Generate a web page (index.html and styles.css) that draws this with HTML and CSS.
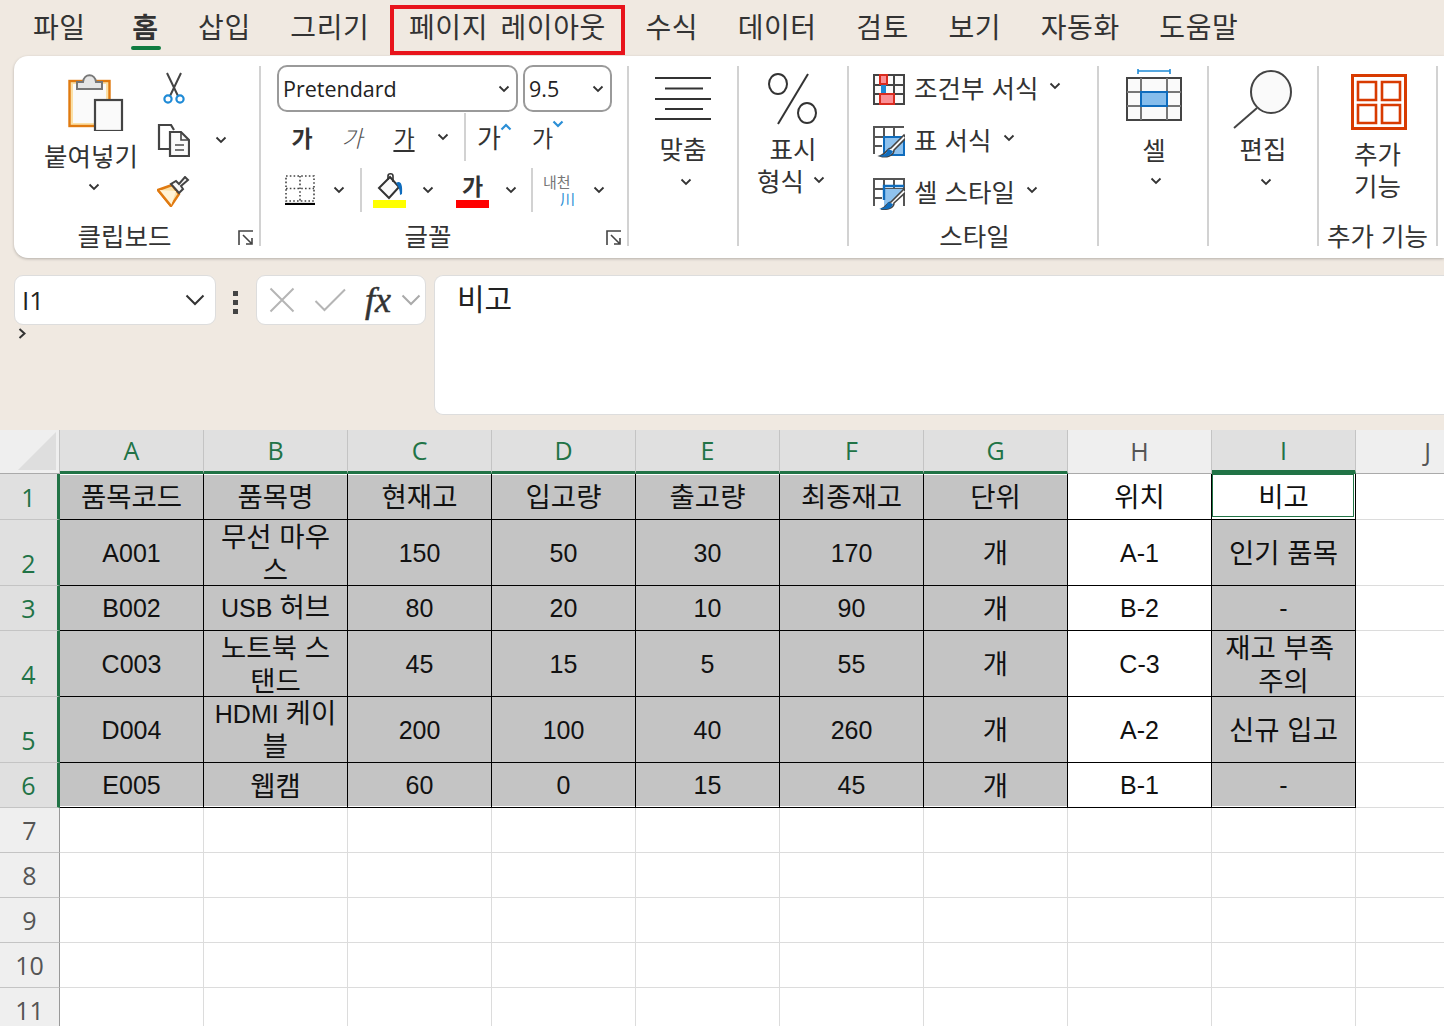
FILE: index.html
```html
<!DOCTYPE html>
<html lang="ko">
<head>
    <meta charset="utf-8" />
    <title>Excel</title>
    <link rel="stylesheet" href="styles.css">
</head>
<body>
    <svg class="defs" width="0" height="0">
        <symbol id="chev" viewBox="0 0 12 8"><path d="M1.5 1.5 6 6l4.5-4.5" fill="none" stroke="#333" stroke-width="1.8"/></symbol>
        <symbol id="launch" viewBox="0 0 16 16"><path d="M1 15V1h14M5 5l9 9M14 8v6H8" fill="none" stroke="#444" stroke-width="1.6"/></symbol>
    </svg>

    <nav class="tabs">
        <span class="tab">파일</span>
        <span class="tab tab-home">홈</span>
        <span class="tab">삽입</span>
        <span class="tab">그리기</span>
        <span class="tab tab-marked">페이지 레이아웃</span>
        <span class="tab">수식</span>
        <span class="tab">데이터</span>
        <span class="tab">검토</span>
        <span class="tab">보기</span>
        <span class="tab">자동화</span>
        <span class="tab">도움말</span>
    </nav>

    <section class="ribbon">
        <div class="group group-clip">
            <div class="clip-body">
                <div class="paste">
                    <svg class="paste-icon" width="56" height="60" viewBox="0 0 56 60">
                        <rect x="1.5" y="10" width="40" height="45" fill="#fbe0a6" stroke="#e07a10" stroke-width="2.4"/>
                        <rect x="5" y="13" width="33" height="39" fill="#fafafa"/>
                        <path d="M9 18v-7h6c1-9 12-9 13 0h6v7z" fill="#e6e6e6" stroke="#777" stroke-width="2"/>
                        <rect x="27" y="29" width="27" height="31" fill="#fafafa" stroke="#444" stroke-width="2.2"/>
                    </svg>
                    <span class="big-label">붙여넣기</span>
                    <svg class="chev chev-paste"><use href="#chev"/></svg>
                </div>
                <div class="clip-tools">
                    <svg width="22" height="33" viewBox="0 0 22 33">
                        <path d="M4 1 15 24M18 1 7 24" fill="none" stroke="#444" stroke-width="2"/>
                        <circle cx="5" cy="27" r="3.6" fill="none" stroke="#1e8ad6" stroke-width="2.2"/>
                        <circle cx="17" cy="27" r="3.6" fill="none" stroke="#1e8ad6" stroke-width="2.2"/>
                    </svg>
                    <svg width="33" height="33" viewBox="0 0 33 33">
                        <path d="M12 25H2V1h12l3 5" fill="none" stroke="#444" stroke-width="2.2"/>
                        <path d="M13 32V8h11l8 8v16z" fill="#fafafa" stroke="#444" stroke-width="2.2"/>
                        <path d="M24 8v8h8" fill="none" stroke="#444" stroke-width="1.6"/>
                        <path d="M18 21h9M18 26h9" stroke="#777" stroke-width="2"/>
                    </svg>
                    <svg width="33" height="31" viewBox="0 0 33 31">
                        <path d="M1 14 15 9l7 9-8 12z" fill="#fbe0a6" stroke="#e07a10" stroke-width="2.4"/>
                        <path d="M1 14 19 15 14 30z" fill="#fff3d6" stroke="none"/>
                        <path d="M1 14 14 30" stroke="#e07a10" stroke-width="2.4"/>
                        <path d="M14 8l8 9 4-4-2-3 7-6-3-3-6 7-3-3z" fill="#fafafa" stroke="#444" stroke-width="2"/>
                    </svg>
                </div>
                <svg class="chev chev-copy"><use href="#chev"/></svg>
            </div>
            <div class="group-label">클립보드</div>
            <svg class="launcher"><use href="#launch"/></svg>
        </div>

        <div class="group group-font">
            <div class="font-combos">
                <div class="combo combo-font">Pretendard<svg class="chev"><use href="#chev"/></svg></div>
                <div class="combo combo-size">9.5<svg class="chev"><use href="#chev"/></svg></div>
            </div>
            <div class="font-row font-row-a">
                <span class="glyph glyph-b">가</span>
                <span class="glyph glyph-i">가</span>
                <span class="glyph glyph-u">가</span>
                <svg class="chev"><use href="#chev"/></svg>
                <i class="vline vline-a"></i>
                <span class="glyph glyph-grow">가<svg width="12" height="8" viewBox="0 0 12 8"><path d="M1.5 6.5 6 2l4.5 4.5" fill="none" stroke="#2b8fd6" stroke-width="2.2"/></svg></span>
                <span class="glyph glyph-shrink">가<svg width="12" height="8" viewBox="0 0 12 8"><path d="M1.5 1.5 6 6l4.5-4.5" fill="none" stroke="#2b8fd6" stroke-width="2.2"/></svg></span>
            </div>
            <div class="font-row font-row-b">
                <svg class="border-icon" width="30" height="30" viewBox="0 0 30 30">
                    <path d="M1 1h28v25H1zM1 13.5h28M15 1v25" fill="none" stroke="#444" stroke-width="1.6" stroke-dasharray="1.6 2.2"/>
                    <path d="M0 29h30" stroke="#000" stroke-width="2.2"/>
                </svg>
                <svg class="chev"><use href="#chev"/></svg>
                <i class="vline vline-b"></i>
                <div class="swatch swatch-fill">
                    <svg width="32" height="28" viewBox="0 0 32 28">
                        <path d="M5 16 16 5l9 10-10 11z" fill="#fafafa" stroke="#333" stroke-width="2"/>
                        <path d="M14 8V4c0-3 5-3 5 0v6" fill="none" stroke="#333" stroke-width="1.6"/>
                        <path d="M22 11c4-3 7 0 6 11l-2 1c0-4-1-8-4-12z" fill="#0f6cbd"/>
                    </svg>
                </div>
                <svg class="chev"><use href="#chev"/></svg>
                <div class="swatch swatch-color"><span>가</span></div>
                <svg class="chev"><use href="#chev"/></svg>
                <i class="vline vline-c"></i>
                <div class="phonetic"><span>내천</span><b>川</b></div>
                <svg class="chev"><use href="#chev"/></svg>
            </div>
            <div class="group-label">글꼴</div>
            <svg class="launcher"><use href="#launch"/></svg>
        </div>

        <div class="group group-big group-align">
            <svg class="big-icon" width="56" height="44" viewBox="0 0 56 44">
                <path d="M0 2h56M10 12.500h38M0 23h56M10 33h38M0 43h56" stroke="#333" stroke-width="1.8"/>
            </svg>
            <span class="big-label">맞춤</span>
            <svg class="chev"><use href="#chev"/></svg>
        </div>

        <div class="group group-big group-number">
            <svg class="big-icon" width="50" height="52" viewBox="0 0 50 52">
                <ellipse cx="10" cy="11" rx="9" ry="10" fill="none" stroke="#333" stroke-width="2"/>
                <ellipse cx="39" cy="40" rx="9" ry="10" fill="none" stroke="#333" stroke-width="2"/>
                <path d="M40 1 10 51" stroke="#333" stroke-width="2"/>
            </svg>
            <span class="big-label">표시</span>
            <span class="big-label big-label-row">형식<svg class="chev"><use href="#chev"/></svg></span>
        </div>

        <div class="group group-styles">
            <div class="style-list">
                <div class="style-item">
                    <svg width="32" height="32" viewBox="0 0 32 32">
                        <path d="M1 1h30v29H1zM11 1v29M21 1v29M1 11h30M1 20h30" fill="#fafafa" stroke="#444" stroke-width="2"/>
                        <rect x="8" y="11" width="5" height="10" fill="#1e8ad6"/>
                        <path d="M7 1h7v9H7zM7 20h14v10H7z" fill="#fb8f95" stroke="#d92b1f" stroke-width="2"/>
                    </svg>
                    조건부 서식<svg class="chev"><use href="#chev"/></svg>
                </div>
                <div class="style-item">
                    <svg width="32" height="32" viewBox="0 0 32 32">
                        <path d="M1 28V1h30M11 1v12M21 1v10M1 11h20M1 20h8" fill="none" stroke="#555" stroke-width="2"/>
                        <path d="M11 11h20v18H11z" fill="#8fc2ee" stroke="#0f6cbd" stroke-width="2"/>
                        <path d="M31 9 18 22c-4 0-4 6-11 8 6 2 14 0 14-6L33 12z" fill="#fafafa" stroke="#444" stroke-width="1.6"/>
                        <path d="M6 30c5-1 8-3 9-7l5 2c-1 5-8 7-14 5z" fill="#0f6cbd"/>
                    </svg>
                    표 서식<svg class="chev"><use href="#chev"/></svg>
                </div>
                <div class="style-item">
                    <svg width="32" height="32" viewBox="0 0 32 32">
                        <path d="M1 28V1h30v27M11 22V1M21 1v10M1 11h30M1 20h8" fill="none" stroke="#555" stroke-width="2"/>
                        <path d="M11 11h20v1L15 28h-4z" fill="#8fc2ee"/>
                        <path d="M11 22V8h20" fill="none" stroke="#0f6cbd" stroke-width="2.4"/>
                        <path d="M31 11 18 24c-4 0-4 5-10 7 6 1 13-1 13-6L33 14z" fill="#fafafa" stroke="#444" stroke-width="1.6"/>
                        <path d="M6 31c5-1 8-3 9-7l5 2c-1 5-8 6-14 5z" fill="#0f6cbd"/>
                    </svg>
                    셀 스타일<svg class="chev"><use href="#chev"/></svg>
                </div>
            </div>
            <div class="group-label">스타일</div>
        </div>

        <div class="group group-big group-cells">
            <svg class="big-icon" width="56" height="52" viewBox="0 0 56 52">
                <path d="M16 2h32M16 0v5M48 0v5" transform="translate(-4 0)" fill="none" stroke="#1e8ad6" stroke-width="1.6"/>
                <rect x="1" y="9" width="54" height="42" fill="#fafafa" stroke="#444" stroke-width="2"/>
                <path d="M15 9v42M41 9v42M1 23h54M1 37h54" stroke="#777" stroke-width="2"/>
                <rect x="15" y="23" width="26" height="14" fill="#86bdec" stroke="#0f6cbd" stroke-width="2"/>
            </svg>
            <span class="big-label">셀</span>
            <svg class="chev"><use href="#chev"/></svg>
        </div>

        <div class="group group-big group-edit">
            <svg class="big-icon" width="60" height="60" viewBox="0 0 60 60">
                <ellipse cx="38" cy="22" rx="20" ry="21" fill="#fafafa" stroke="#444" stroke-width="2"/>
                <path d="M24 38 1 58" stroke="#444" stroke-width="2"/>
            </svg>
            <span class="big-label">편집</span>
            <svg class="chev"><use href="#chev"/></svg>
        </div>

        <div class="group group-big group-addin">
            <svg class="big-icon" width="56" height="56" viewBox="0 0 56 56">
                <rect x="1.500" y="1.500" width="53" height="53" fill="none" stroke="#d83b01" stroke-width="3"/>
                <path d="M7 8h18v18H7zM31 8h18v18H31zM7 31h18v18H7zM31 31h18v18H31z" fill="none" stroke="#d83b01" stroke-width="2.600"/>
            </svg>
            <span class="big-label">추가</span>
            <span class="big-label">기능</span>
            <div class="group-label">추가 기능</div>
        </div>
    </section>

    <section class="formula-bar">
        <div class="name-col">
            <div class="name-box">I1<svg class="chev-lg" width="20" height="12" viewBox="0 0 20 12"><path d="M1.500 1.500 10 10l8.500-8.500" fill="none" stroke="#333" stroke-width="2"/></svg></div>
            <svg class="expand" width="9" height="11" viewBox="0 0 9 11"><path d="M1.500 1 6.500 5.500 1.500 10" fill="none" stroke="#333" stroke-width="2"/></svg>
        </div>
        <div class="dots"><i></i><i></i><i></i></div>
        <div class="fx-box">
            <svg width="26" height="26" viewBox="0 0 26 26"><path d="M1.500 1.500l23 23M24.500 1.500l-23 23" stroke="#b5b5b5" stroke-width="2"/></svg>
            <svg width="32" height="24" viewBox="0 0 32 24"><path d="M1.500 13l9 9L31 1.500" fill="none" stroke="#b5b5b5" stroke-width="2"/></svg>
            <span class="fx">fx</span>
            <svg width="20" height="12" viewBox="0 0 20 12"><path d="M1.500 1.500 10 10l8.500-8.500" fill="none" stroke="#aaa" stroke-width="2"/></svg>
        </div>
        <div class="formula-input">비고</div>
    </section>

    <table class="sheet">
        <colgroup>
            <col class="col-head"><col><col><col><col><col><col><col><col><col><col>
        </colgroup>
        <tr class="r-head">
            <th class="corner"><svg width="40" height="38" viewBox="0 0 40 38"><path d="M38 0v38H0z" fill="#dedede"/></svg></th>
            <th class="on">A</th><th class="on">B</th><th class="on">C</th><th class="on">D</th><th class="on">E</th><th class="on">F</th><th class="on">G</th><th>H</th><th class="on on-active">I</th><th>J</th>
        </tr>
        <tr class="r46 first">
            <th class="on">1</th>
            <td class="fill ko">품목코드</td><td class="fill ko">품목명</td><td class="fill ko">현재고</td><td class="fill ko">입고량</td><td class="fill ko">출고량</td><td class="fill ko">최종재고</td><td class="fill ko">단위</td>
            <td class="box ko">위치</td><td class="box ko active">비고</td><td></td>
        </tr>
        <tr class="r66">
            <th class="on">2</th>
            <td class="fill">A001</td><td class="fill ko"><div class="two">무선 마우<br>스</div></td><td class="fill">150</td><td class="fill">50</td><td class="fill">30</td><td class="fill">170</td><td class="fill ko">개</td>
            <td class="box">A-1</td><td class="fill ko">인기 품목</td><td></td>
        </tr>
        <tr class="r45">
            <th class="on">3</th>
            <td class="fill">B002</td><td class="fill">USB <span class="ko">허브</span></td><td class="fill">80</td><td class="fill">20</td><td class="fill">10</td><td class="fill">90</td><td class="fill ko">개</td>
            <td class="box">B-2</td><td class="fill">-</td><td></td>
        </tr>
        <tr class="r66">
            <th class="on">4</th>
            <td class="fill">C003</td><td class="fill ko"><div class="two">노트북 스<br>탠드</div></td><td class="fill">45</td><td class="fill">15</td><td class="fill">5</td><td class="fill">55</td><td class="fill ko">개</td>
            <td class="box">C-3</td><td class="fill ko"><div class="two">재고 부족&nbsp;<br>주의</div></td><td></td>
        </tr>
        <tr class="r66">
            <th class="on">5</th>
            <td class="fill">D004</td><td class="fill"><div class="two">HDMI <span class="ko">케이<br>블</span></div></td><td class="fill">200</td><td class="fill">100</td><td class="fill">40</td><td class="fill">260</td><td class="fill ko">개</td>
            <td class="box">A-2</td><td class="fill ko">신규 입고</td><td></td>
        </tr>
        <tr class="r45 last">
            <th class="on">6</th>
            <td class="fill">E005</td><td class="fill ko">웹캠</td><td class="fill">60</td><td class="fill">0</td><td class="fill">15</td><td class="fill">45</td><td class="fill ko">개</td>
            <td class="box">B-1</td><td class="fill">-</td><td></td>
        </tr>
        <tr class="r45"><th>7</th><td></td><td></td><td></td><td></td><td></td><td></td><td></td><td></td><td></td><td></td></tr>
        <tr class="r45"><th>8</th><td></td><td></td><td></td><td></td><td></td><td></td><td></td><td></td><td></td><td></td></tr>
        <tr class="r45"><th>9</th><td></td><td></td><td></td><td></td><td></td><td></td><td></td><td></td><td></td><td></td></tr>
        <tr class="r45"><th>10</th><td></td><td></td><td></td><td></td><td></td><td></td><td></td><td></td><td></td><td></td></tr>
        <tr class="r45"><th>11</th><td></td><td></td><td></td><td></td><td></td><td></td><td></td><td></td><td></td><td></td></tr>
    </table>
</body>
</html>
```

FILE: styles.css
```css
* {
    box-sizing: border-box;
}
html, body {
    margin: 0;
    height: 1026px;
    overflow: hidden;
}
body {
    width: 1444px;
    background: #f0e9e1;
    color: #222;
    font-family: "Noto Sans CJK KR", "Noto Sans", sans-serif;
    font-weight: 400;
}
.defs {
    position: absolute;
}

/* tabs */
.tabs {
    display: flex;
    gap: 39.5px;
    height: 56px;
    padding: 6px 0 0 33px;
    font-size: 28px;
    letter-spacing: 0.6px;
    word-spacing: 4px;
    line-height: 40px;
    color: #333;
}
.tab {
    position: relative;
    white-space: nowrap;
}
.tab-home {
    margin-left: 7px;
    font-weight: 700;
}
.tab-home::after {
    content: "";
    position: absolute;
    left: -1px;
    right: -2px;
    top: 40px;
    height: 4px;
    border-radius: 2px;
    background: #107c41;
}
.tab-marked::after {
    content: "";
    position: absolute;
    left: -19px;
    right: -19px;
    top: -1px;
    bottom: 1px;
    border: 4px solid #e8141c;
}

/* ribbon */
.ribbon {
    display: flex;
    height: 202px;
    margin-left: 14px;
    padding: 10px 0 12px;
    background: #fff;
    border-radius: 14px 0 0 14px;
    box-shadow: 0 1px 3px rgba(0, 0, 0, 0.25);
}
.group {
    position: relative;
    display: flex;
    flex-direction: column;
    flex: none;
    height: 180px;
    border-right: 2px solid #d2d2d2;
}
.group-label {
    position: absolute;
    left: 0;
    right: 0;
    top: 151px;
    text-align: center;
    font-size: 25.5px;
    line-height: 36px;
    color: #333;
}
.group-clip .group-label {
    padding-right: 24px;
}
.group-font .group-label {
    padding-right: 32px;
}
.group-styles .group-label {
    padding-left: 3px;
}
.launcher {
    position: absolute;
    right: 5px;
    top: 164px;
    width: 16px;
    height: 16px;
}
.chev {
    display: block;
    flex: none;
    width: 12px;
    height: 8px;
}
.big-label {
    display: block;
    font-size: 25.5px;
    line-height: 32px;
    color: #333;
    white-space: nowrap;
}

/* clipboard */
.group-clip {
    width: 247px;
}
.clip-body {
    display: flex;
}
.paste {
    display: flex;
    flex-direction: column;
    align-items: center;
    width: 94px;
    margin-left: 30px;
    padding-top: 5px;
}
.paste-icon {
    margin: 0 0 8px 10px;
}
.chev-paste {
    margin-top: 12px;
    margin-left: 6px;
}
.clip-tools {
    display: flex;
    flex-direction: column;
    align-items: center;
    gap: 19px;
    width: 33px;
    margin-left: 19px;
    padding-top: 6px;
}
.chev-copy {
    margin: 70px 0 0 25px;
}

/* font */
.group-font {
    width: 368px;
    padding-left: 16px;
}
.font-combos {
    display: flex;
    gap: 5px;
    margin-top: -1px;
}
.combo {
    display: flex;
    align-items: center;
    justify-content: space-between;
    height: 47px;
    padding: 0 6px 0 4px;
    border: 2px solid #9a9a9a;
    border-radius: 10px;
    font-family: "Open Sans", sans-serif;
    font-size: 21.5px;
    color: #222;
}
.combo-font {
    width: 241px;
}
.combo-size {
    width: 89px;
}
.font-row {
    display: flex;
    align-items: center;
}
.font-row-a {
    height: 50px;
}
.font-row-b {
    height: 46px;
    margin-top: 5px;
}
.vline {
    flex: none;
    width: 2px;
    background: #d2d2d2;
}
.glyph {
    display: block;
    text-align: center;
    font-size: 23px;
    line-height: 40px;
    color: #333;
}
.glyph-b {
    width: 50px;
    font-weight: 700;
}
.glyph-i {
    width: 50px;
    font-style: italic;
    font-weight: 300;
    color: #555;
}
.glyph-u {
    width: 54px;
    text-decoration: underline;
    text-underline-offset: 3px;
}
.font-row-a .chev {
    margin-left: 6px;
}
.vline-a {
    height: 48px;
    margin: 0 11px 0 15px;
}
.glyph-grow, .glyph-shrink {
    display: flex;
    align-items: flex-start;
    font-size: 26px;
}
.glyph-shrink {
    margin-left: 20px;
    font-size: 23px;
}
.glyph-grow svg, .glyph-shrink svg {
    margin: 6px 0 0 -1px;
}
.glyph-shrink svg {
    margin-top: 3px;
}
.border-icon {
    margin-left: 8px;
}
.font-row-b .chev {
    margin-left: 18px;
}
.vline-b {
    height: 44px;
    margin: 0 11px 0 15px;
}
.swatch {
    display: flex;
    justify-content: center;
    width: 33px;
    height: 36px;
    border-bottom: 8px solid #ff0;
}
.swatch-color {
    margin-left: 22px;
    border-bottom-color: #f00;
    font-size: 23px;
    font-weight: 700;
    line-height: 26px;
    color: #333;
}
.font-row-b .swatch + .chev {
    margin-left: 16px;
}
.vline-c {
    height: 44px;
    margin: 0 10px 0 14px;
}
.phonetic {
    display: flex;
    flex-direction: column;
    width: 34px;
    font-size: 15px;
    line-height: 17px;
    color: #777;
}
.phonetic b {
    align-self: flex-end;
    margin-right: 2px;
    font-weight: 400;
    color: #2b8fd6;
}
.font-row-b .phonetic + .chev {
    margin-left: 16px;
}

/* big buttons */
.group-big {
    align-items: center;
    width: 110px;
}
.big-icon {
    flex: none;
}
.group-align {
    padding-top: 10px;
}
.group-align .big-icon {
    margin-bottom: 12px;
}
.group-align .chev {
    margin: 14px 0 0 5px;
}
.group-number {
    padding-top: 7px;
}
.group-number .big-icon {
    margin-bottom: 7px;
}
.big-label-row {
    display: flex;
    align-items: center;
    gap: 9px;
    margin-left: -4px;
}

/* styles */
.group-styles {
    width: 250px;
}
.style-list {
    display: flex;
    flex-direction: column;
    gap: 20px;
    padding: 8px 0 0 24px;
}
.style-item {
    display: flex;
    align-items: center;
    height: 32px;
    padding-bottom: 8px;
    font-size: 25.5px;
    color: #333;
    white-space: nowrap;
}
.style-item svg:first-child {
    margin: 8px 9px 0 0;
}
.style-item .chev {
    margin-left: 11px;
}
.group-cells {
    padding-top: 3px;
}
.group-cells .big-icon {
    margin: 0 0 12px 2px;
}
.group-cells .big-label {
    margin-left: 2px;
}
.group-cells .chev {
    margin: 12px 0 0 6px;
}
.group-edit {
    padding-top: 4px;
}
.group-edit .big-icon {
    margin-bottom: 2px;
}
.group-edit .chev {
    margin: 14px 0 0 6px;
}
.group-addin {
    width: 119px;
    padding-top: 8px;
}
.group-addin .big-icon {
    margin: 0 0 7px 2px;
}

/* formula bar */
.formula-bar {
    display: flex;
    height: 172px;
    padding: 17px 0 15px 14px;
}
.name-col {
    width: 202px;
}
.name-box {
    display: flex;
    align-items: center;
    justify-content: space-between;
    height: 50px;
    padding: 0 10px 0 7px;
    background: #fff;
    border: 1px solid #ddd;
    border-radius: 9px;
    font-family: "Open Sans", sans-serif;
    font-size: 26px;
}
.expand {
    display: block;
    margin: 3px 0 0 4px;
}
.dots {
    display: flex;
    flex-direction: column;
    gap: 4px;
    width: 40px;
    padding: 16px 0 0 17px;
}
.dots i {
    width: 5px;
    height: 5px;
    background: #444;
}
.fx-box {
    display: flex;
    align-items: center;
    width: 170px;
    height: 50px;
    padding-left: 12px;
    background: #fff;
    border: 1px solid #ddd;
    border-radius: 9px;
}
.fx-box svg:nth-child(2) {
    margin-left: 19px;
}
.fx {
    width: 36px;
    margin-left: 19px;
    font-family: "Liberation Serif", serif;
    font-size: 36px;
    font-style: italic;
    line-height: 40px;
    color: #333;
    -webkit-text-stroke: 0.5px #333;
}
.formula-input {
    flex: 1;
    margin-left: 8px;
    padding-left: 22px;
    background: #fff;
    border: 1px solid #ddd;
    border-right: 0;
    border-radius: 9px 0 0 9px;
    font-size: 30px;
    line-height: 42px;
}

/* sheet */
.sheet {
    width: 1500px;
    table-layout: fixed;
    border-collapse: separate;
    border-spacing: 0;
    background: #fff;
    font-family: "Liberation Sans", sans-serif;
    font-size: 25px;
    color: #111;
}
col {
    width: 144px;
}
.col-head {
    width: 60px;
}
.r-head {
    height: 44px;
}
.r46 {
    height: 46px;
}
.r66 {
    height: 66px;
}
.r45 {
    height: 45px;
}
td, th {
    padding: 0;
    text-align: center;
    white-space: nowrap;
    line-height: 32px;
}
td {
    position: relative;
    border-right: 1px solid #dcdcdc;
    border-bottom: 1px solid #dcdcdc;
}
th {
    background: #efefef;
    border-right: 1px solid #c4c4c4;
    border-bottom: 1px solid #c4c4c4;
    font-family: "Open Sans", sans-serif;
    font-size: 25px;
    font-weight: 400;
    color: #555;
}
th.on {
    background: #e0e0e0;
    color: #217346;
}
.r-head th {
    padding-bottom: 1px;
    border-bottom-color: #aaa;
}
.r-head th.on {
    border-bottom: 3px solid #217346;
}
.r-head th.on-active {
    border-bottom-width: 4px;
}
tr:not(.r-head) th {
    vertical-align: bottom;
    padding-bottom: 6px;
    border-right-color: #999;
}
tr:not(.r-head) th.on {
    border-right: 3px solid #217346;
}
th.corner {
    padding: 0;
    vertical-align: bottom;
}
.corner svg {
    display: block;
    margin: 0 0 3px 18px;
}
.fill {
    background: #c4c4c4;
    border-color: #000;
}
.box {
    background: #fff;
    border-color: #000;
}
.first td {
    box-shadow: inset 0 1px 0 #fff;
}
.last td.fill, .last td.box {
    box-shadow: inset 0 -1px 0 #fff;
}
td.active::after {
    content: "";
    position: absolute;
    inset: 0 1px 2px 0;
    border: 1px solid #217346;
}
td.ko {
    padding-bottom: 3px;
}
.two {
    margin: -1px 0 -3px;
    line-height: 33px;
}
.ko {
    font-family: "Noto Sans CJK KR", sans-serif;
    font-size: 27.5px;
}
span.ko {
    line-height: 20px;
}
```
